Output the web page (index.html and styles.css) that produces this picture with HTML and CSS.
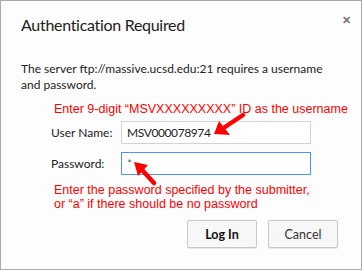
FILE: index.html
```html
<!DOCTYPE html>
<html lang="en">

<head>
    <meta charset="UTF-8">
    <title>Authentication Required</title>
    <link rel="stylesheet" href="styles.css">
</head>

<body>
    <div class="dialog">
        <div class="header">
            <h1 class="title">Authentication Required</h1>
            <span class="close">&#x2715;</span>
        </div>
        <p class="message">The server ftp://massive.ucsd.edu:21 requires a username and password.</p>
        <div class="form">
            <p class="hint hint-user">Enter 9-digit &ldquo;MSVXXXXXXXXX&rdquo; ID as the username</p>
            <div class="row">
                <label class="label" for="user">User Name:</label>
                <input class="field" id="user" type="text" value="MSV000078974">
            </div>
            <div class="row">
                <label class="label" for="pass">Password:</label>
                <input class="field focused" id="pass" type="text" value="*">
            </div>
            <p class="hint hint-pass">Enter the password specified by the submitter,<br>or &ldquo;a&rdquo; if there should be no password</p>
        </div>
        <div class="buttons">
            <button class="btn primary">Log In</button>
            <button class="btn">Cancel</button>
        </div>
        <!-- annotation arrows drawn over the dialog -->
        <svg class="arrows" width="362" height="271" viewBox="0 0 362 271">
            <line x1="243" y1="115" x2="225" y2="127" stroke="#f00" stroke-width="4.5" stroke-linecap="round" />
            <polygon points="214,134 219,121 230,135" fill="#f00" />
            <line x1="154" y1="183" x2="143" y2="171" stroke="#f00" stroke-width="4.5" stroke-linecap="round" />
            <polygon points="134,162 148,165 138,176" fill="#f00" />
        </svg>
    </div>
</body>

</html>
```

FILE: styles.css
```css
body {
    margin: 0;
    padding: 0;
    background-color: #fff;
    font-family: Lato, "Noto Sans", sans-serif;
}

.dialog {
    position: relative;
    box-sizing: border-box;
    width: 362px;
    height: 270px;
    border: 1px solid #a9a9a9;
    background-color: #fdfdfd;
    padding: 0 23px 0 20px;
    display: flex;
    flex-direction: column;
}

.header {
    display: flex;
    justify-content: space-between;
    align-items: flex-start;
    margin-top: 13px;
}

.title {
    margin: 0;
    font-size: 16px;
    font-weight: normal;
    line-height: 22px;
    letter-spacing: -0.3px;
    color: #222;
}

.close {
    font-size: 11px;
    font-weight: bold;
    color: #777;
    margin-top: -1px;
    margin-right: -13px;
}

.message {
    margin: 25px 0 0 0;
    font-size: 12px;
    line-height: 16px;
    color: #222;
}

.form {
    margin-left: 30px;
    display: flex;
    flex-direction: column;
}

.hint {
    margin: 0;
    color: #f00;
    font-family: "Liberation Sans", Arial, sans-serif;
    font-size: 12.5px;
    line-height: 14px;
    margin-left: 3px;
    white-space: nowrap;
}

.hint-user {
    margin-top: 9px;
    margin-bottom: 5px;
}

.hint-pass {
    margin-top: 8px;
}

.row {
    display: flex;
    align-items: center;
    margin-bottom: 8px;
}

.row:last-of-type {
    margin-bottom: 0;
}

.label {
    width: 70px;
    font-size: 12px;
    color: #222;
}

.field {
    box-sizing: border-box;
    width: 190px;
    height: 23px;
    margin: 0;
    padding: 0 5px;
    border: 1px solid #d3d3d3;
    background: #fff;
    font-family: Lato, "Noto Sans", sans-serif;
    font-size: 12px;
    letter-spacing: -0.4px;
    color: #222;
}

.field.focused {
    border-color: #4d90fe;
    color: #666;
}

.buttons {
    display: flex;
    justify-content: flex-end;
    gap: 11px;
    margin-top: 9px;
}

.btn {
    box-sizing: border-box;
    width: 70px;
    height: 28px;
    border: 1px solid #c8c8c8;
    border-radius: 2px;
    background: #f7f7f7;
    box-shadow: 0 1px 0 rgba(0, 0, 0, 0.08);
    font-family: Lato, "Noto Sans", sans-serif;
    font-size: 12.5px;
    color: #333;
}

.btn.primary {
    font-weight: bold;
    color: #111;
}

.arrows {
    position: absolute;
    left: -1px;
    top: -1px;
}
```
